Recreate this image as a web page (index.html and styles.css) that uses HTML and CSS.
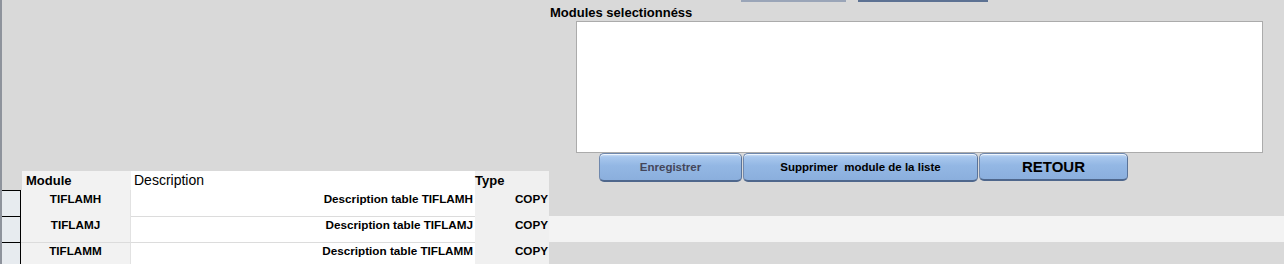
FILE: index.html
```html
<!DOCTYPE html>
<html lang="fr">
<head>
    <meta charset="UTF-8">
    <meta name="viewport" content="width=device-width, initial-scale=1.0">
    <title>Modules</title>
    <link rel="stylesheet" href="styles.css">
</head>
<body>
    <div class="top_strip">
        <span class="stub stub_a"></span>
        <span class="stub stub_b"></span>
    </div>

    <div class="selection">
        <div class="sel_label">Modules selectionnéss</div>
        <div class="sel_list"></div>
        <div class="actions">
            <button class="btn btn_save">Enregistrer</button>
            <button class="btn btn_del">Supprimer&nbsp; module de la liste</button>
            <button class="btn btn_back">RETOUR</button>
        </div>
    </div>

    <div class="grid">
        <div class="row head">
            <div class="sel_box empty"></div>
            <div class="cell c_module">Module</div>
            <div class="cell c_desc">Description</div>
            <div class="cell c_type">Type</div>
        </div>
        <div class="row">
            <div class="sel_box"></div>
            <div class="cell c_module">TIFLAMH</div>
            <div class="cell c_desc">Description table TIFLAMH</div>
            <div class="cell c_type">COPY</div>
        </div>
        <div class="row alt">
            <div class="sel_box"></div>
            <div class="cell c_module">TIFLAMJ</div>
            <div class="cell c_desc line">Description table TIFLAMJ</div>
            <div class="cell c_type">COPY</div>
        </div>
        <div class="row">
            <div class="sel_box"></div>
            <div class="cell c_module line">TIFLAMM</div>
            <div class="cell c_desc line">Description table TIFLAMM</div>
            <div class="cell c_type">COPY</div>
        </div>
    </div>
</body>
</html>
```

FILE: styles.css
```css
html,body{
    margin: 0;
    padding: 0;
}
body{
    width: 1282px;
    height: 264px;
    overflow: hidden;
    background-color: #d9d9d9;
    border-left: 2px solid #8e939c;
    font-family: "Liberation Sans", Arial, sans-serif;
    color: #000;
}

/* bouts de boutons coupés en haut */
.top_strip{
    display: flex;
    height: 2px;
    padding-left: 739px;
}
.stub{
    display: block;
    height: 2px;
}
.stub_a{
    width: 105px;
    background-color: #9aa5b8;
}
.stub_b{
    width: 130px;
    margin-left: 12px;
    background-color: #5d7293;
}

/* zone de sélection */
.selection{
    padding-left: 548px;
}
.sel_label{
    height: 17px;
    padding-top: 2px;
    line-height: 17px;
    font-size: 13px;
    font-weight: bold;
}
.sel_list{
    width: 685px;
    height: 130px;
    margin-left: 26px;
    background-color: #fff;
    border: 1px solid #ababab;
}
.actions{
    display: flex;
    height: 29px;
    padding-left: 49px;
    gap: 1px;
}
.btn{
    height: 29px;
    padding: 0;
    border: 1px solid #6f88ad;
    border-bottom: 2px solid #4f678c;
    border-right-color: #5a7398;
    border-radius: 5px;
    background: linear-gradient(#d3e4f8 0, #a8c7ed 3px, #93b7e4 45%, #8bafdd 100%);
    box-shadow: inset 0 1px 0 #eef5fd;
    font-family: "Liberation Sans", Arial, sans-serif;
    font-size: 11.5px;
    font-weight: bold;
    color: #000;
    cursor: pointer;
}
.btn_save{
    width: 143px;
    color: #44465a;
}
.btn_del{
    width: 235px;
}
.btn_back{
    width: 149px;
    height: 28px;
    font-size: 15px;
}

/* tableau */
.grid{
    margin-top: -11px;
}
.row{
    display: flex;
    height: 26px;
}
.row.alt{
    background-color: #f3f3f3;
}
.row.head{
    height: 19px;
}
.sel_box{
    width: 18px;
    background-color: #e7ebef;
    border-top: 1px solid #000;
    border-right: 1px solid #000;
}
.sel_box.empty{
    width: 20px;
    background: none;
    border: none;
}
.cell{
    box-sizing: border-box;
    font-size: 11.7px;
    font-weight: bold;
    line-height: 14px;
    padding-top: 2px;
}
.c_module{
    width: 110px;
    background-color: #f2f2f2;
    text-align: center;
    border-right: 1px solid #e2e2e2;
}
.c_desc{
    width: 344px;
    background-color: #fff;
    text-align: right;
    padding-right: 2px;
}
.c_type{
    width: 74px;
    background-color: #f0f0f0;
    text-align: right;
    padding-right: 1px;
}
.line{
    border-top: 1px solid #dcdcdc;
    padding-top: 1px;
}
.head .cell{
    line-height: 19px;
    padding-top: 0;
    font-size: 13px;
    text-align: left;
}
.head .c_module{
    width: 109px;
    padding-left: 4px;
    border-right: none;
}
.head .c_desc{
    padding-left: 3px;
    font-size: 14px;
    font-weight: normal;
}
```
